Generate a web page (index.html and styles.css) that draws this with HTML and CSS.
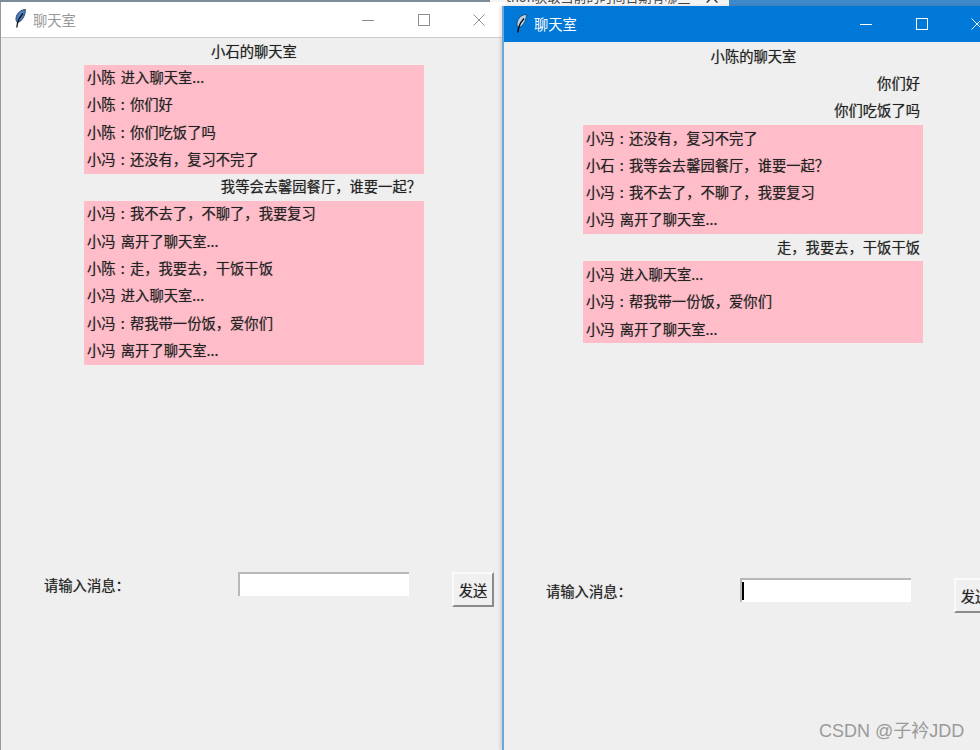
FILE: index.html
```html
<!DOCTYPE html>
<html lang="zh">
<head>
<meta charset="utf-8">
<title>聊天室</title>
<link rel="stylesheet" href="styles.css">
</head>
<body>
<div class="desktop">
  <div class="browser-strip"><div class="tab"><span class="tab-text">thon获取当前的时间日期有哪些</span><span class="tab-close">×</span></div><div class="browser-blue"></div></div>

  <section class="window window-left">
    <header class="titlebar">
      <svg class="feather" viewBox="0 0 11 19" width="11" height="19"><path d="M10.500.5C6.500.5 1.800 3.500 1 9c-.3 2 .4 3.800 1.600 4.500C7 12.500 10.200 7 10.500.5z" fill="#4a7fc4" stroke="#22334d" stroke-width=".8"/><path d="M8 4.500 4.500 9 2.500 14 1.800 18.500" fill="none" stroke="#111" stroke-width="1.300"/></svg>
      <span class="title">聊天室</span>
      <div class="controls">
        <span class="ctl"><svg width="12" height="12" viewBox="0 0 12 12"><path d="M0 6.500h12" stroke="currentColor"/></svg></span>
        <span class="ctl"><svg width="12" height="12" viewBox="0 0 12 12"><rect x=".5" y=".5" width="11" height="11" fill="none" stroke="currentColor"/></svg></span>
        <span class="ctl"><svg width="12" height="12" viewBox="0 0 12 12"><path d="M.5.5l11 11M11.500.5l-11 11" stroke="currentColor" fill="none"/></svg></span>
      </div>
    </header>
    <div class="content">
      <h1 class="room">小石的聊天室</h1>
      <div class="messages">
        <p class="msg in">小陈 进入聊天室...</p>
        <p class="msg in">小陈 : 你们好</p>
        <p class="msg in">小陈 : 你们吃饭了吗</p>
        <p class="msg in">小冯 : 还没有&#xFF0C;复习不完了</p>
        <p class="msg out">我等会去馨园餐厅&#xFF0C;谁要一起&#xFF1F;</p>
        <p class="msg in">小冯 : 我不去了&#xFF0C;不聊了&#xFF0C;我要复习</p>
        <p class="msg in">小冯 离开了聊天室...</p>
        <p class="msg in">小陈 : 走&#xFF0C;我要去&#xFF0C;干饭干饭</p>
        <p class="msg in">小冯 进入聊天室...</p>
        <p class="msg in">小冯 : 帮我带一份饭&#xFF0C;爱你们</p>
        <p class="msg in">小冯 离开了聊天室...</p>
      </div>
      <div class="form">
        <label class="label">请输入消息&#xFF1A;</label>
        <div class="entry"></div>
        <button class="send">发送</button>
      </div>
    </div>
  </section>

  <section class="window window-right">
    <header class="titlebar">
      <svg class="feather" viewBox="0 0 11 19" width="11" height="19"><path d="M10.500.5C6.500.5 1.800 3.500 1 9c-.3 2 .4 3.800 1.600 4.500C7 12.500 10.200 7 10.500.5z" fill="#b9d2ea" stroke="#123a5e" stroke-width=".8"/><path d="M8 4.500 4.500 9 2.500 14 1.800 18.500" fill="none" stroke="#000" stroke-width="1.300"/></svg>
      <span class="title">聊天室</span>
      <div class="controls">
        <span class="ctl"><svg width="12" height="12" viewBox="0 0 12 12"><path d="M0 6.500h12" stroke="currentColor"/></svg></span>
        <span class="ctl"><svg width="12" height="12" viewBox="0 0 12 12"><rect x=".5" y=".5" width="11" height="11" fill="none" stroke="currentColor"/></svg></span>
        <span class="ctl"><svg width="12" height="12" viewBox="0 0 12 12"><path d="M.5.5l11 11M11.500.5l-11 11" stroke="currentColor" fill="none"/></svg></span>
      </div>
    </header>
    <div class="content">
      <h1 class="room">小陈的聊天室</h1>
      <div class="messages">
        <p class="msg out">你们好</p>
        <p class="msg out">你们吃饭了吗</p>
        <p class="msg in">小冯 : 还没有&#xFF0C;复习不完了</p>
        <p class="msg in">小石 : 我等会去馨园餐厅&#xFF0C;谁要一起&#xFF1F;</p>
        <p class="msg in">小冯 : 我不去了&#xFF0C;不聊了&#xFF0C;我要复习</p>
        <p class="msg in">小冯 离开了聊天室...</p>
        <p class="msg out">走&#xFF0C;我要去&#xFF0C;干饭干饭</p>
        <p class="msg in">小冯 进入聊天室...</p>
        <p class="msg in">小冯 : 帮我带一份饭&#xFF0C;爱你们</p>
        <p class="msg in">小冯 离开了聊天室...</p>
      </div>
      <div class="form">
        <label class="label">请输入消息&#xFF1A;</label>
        <div class="entry"><span class="caret"></span></div>
        <button class="send">发送</button>
      </div>
    </div>
  </section>

  <div class="watermark">CSDN @子衿JDD</div>
</div>
</body>
</html>
```
FILE: styles.css
```css
* { box-sizing: border-box; }
html, body { margin: 0; padding: 0; }
body {
  width: 980px;
  height: 750px;
  overflow: hidden;
  font-family: "Noto Sans CJK SC", "Liberation Sans", sans-serif;
}
.desktop {
  position: relative;
  width: 980px;
  height: 750px;
  overflow: hidden;
  background: #7d8c99;
}
.browser-strip {
  position: absolute;
  left: 490px;
  top: 0;
  right: 0;
  height: 8px;
  display: flex;
  overflow: hidden;
}
.tab {
  position: relative;
  width: 239px;
  height: 8px;
  background: #f4f4f4;
  color: #444;
  font-size: 13px;
  overflow: hidden;
  white-space: nowrap;
}
.tab-text { position: absolute; left: 16px; top: -13px; line-height: 20px; }
.tab-close { position: absolute; left: 213px; top: -14px; line-height: 20px; font-size: 18px; color: #111; }
.browser-blue { flex: 1; background: #3f88c9; }

.window {
  position: absolute;
  display: flex;
  flex-direction: column;
  background: #efefef;
}
.window-left { left: 0; top: 2px; width: 507px; height: 748px; border-left: 1px solid #999; }
.window-right { left: 502px; top: 6px; width: 503px; height: 744px; border-left: 2px solid #6ea6da; box-shadow: -2px 0 3px rgba(0,0,0,.12); }

.titlebar {
  display: flex;
  align-items: center;
  flex: none;
  height: 36px;
}
.window-left .titlebar { background: #fff; color: #999; border-bottom: 1px solid #cdcdcd; padding-left: 14px; }
.window-right .titlebar { background: #0078d7; color: #fff; padding-left: 12px; }
.feather { flex: none; margin-top: -2px; }
.window-left .feather { margin-top: -3px; }
.title { margin-left: 7px; font-size: 14.3px; line-height: 20px; }
.controls { margin-left: auto; display: flex; }
.ctl { width: 55.5px; height: 34px; display: flex; align-items: center; justify-content: center; color: #8f8f8f; }
.window-right .ctl { color: #fff; }

.content { flex: 1; display: flex; flex-direction: column; color: #222; }
.room {
  margin: 0;
  height: 27px;
  font-size: 14.3px;
  line-height: 25px;
  font-weight: 400;
  text-align: center;
  text-shadow: 0 0 1px rgba(30,30,30,.45);
}
.window-right .room { width: 499px; height: 28px; line-height: 28px; }
.messages {
  width: 340px;
  height: 507px;
  margin-left: 83px;
}
.window-right .messages { margin-left: 79px; height: 508px; }
.msg {
  margin: 0;
  height: 27.3px;
  padding: 0 3px;
  font-size: 14.3px;
  line-height: 25px;
  word-spacing: 2px;
  white-space: nowrap;
  text-shadow: 0 0 1px rgba(30,30,30,.45);
}
.window-left .msg { line-height: 24px; }
.msg.in { background: #ffbdca; }
.msg.out { text-align: right; }
.form { display: flex; align-items: flex-start; padding-left: 43px; }
.window-right .form { padding-left: 42px; }
.label { width: 194px; font-size: 14.3px; line-height: 26px; text-shadow: 0 0 1px rgba(30,30,30,.45); }
.entry {
  width: 171px;
  height: 24px;
  background: #fff;
  border-top: 2px solid #b8b8b8;
  border-left: 2px solid #b8b8b8;
  display: flex;
  align-items: center;
  margin-right: 43px;
}
.caret { width: 2px; height: 18px; background: #000; }
.send {
  flex: none;
  width: 42px;
  height: 35px;
  padding: 0;
  background: #f0f0f0;
  color: #222;
  border: 2px solid;
  border-color: #fafafa #8a8a8a #8a8a8a #fafafa;
  font: 14.3px "Noto Sans CJK SC", sans-serif;
  text-shadow: 0 0 1px rgba(30,30,30,.45);
}
.watermark {
  position: absolute;
  left: 819px;
  top: 719px;
  font-size: 18px;
  line-height: 24px;
  color: #9a9a9a;
  white-space: nowrap;
  font-family: "Liberation Sans", "Noto Sans CJK SC", sans-serif;
}
```
